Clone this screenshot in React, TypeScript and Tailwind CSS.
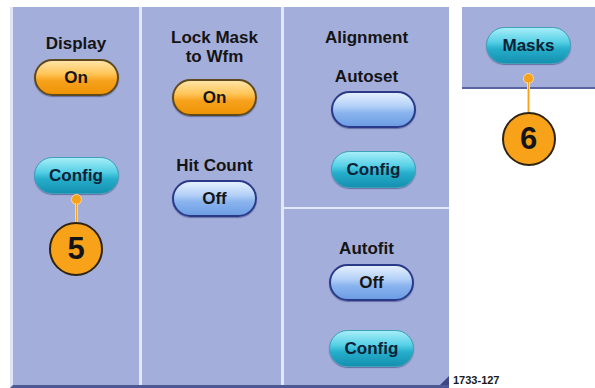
type Tone = "orange" | "cyan" | "blue";

const tones: Record<Tone, string> = {
  orange:
    "bg-[linear-gradient(to_bottom,#ffe4a6_0%,#ffc456_40%,#f7a11c_60%,#ee9406_100%)] border-2 border-[#5e4a1e] text-[#151515]",
  cyan:
    "bg-[linear-gradient(to_bottom,#a6eef8_0%,#56d0e6_40%,#25aecb_60%,#1590b0_100%)] border border-[#3e9fb6] text-[#0c2236]",
  blue:
    "bg-[linear-gradient(to_bottom,#e4efff_0%,#b3d0f7_40%,#8ab4ee_60%,#6d9de4_100%)] border-2 border-[#2a3a88] text-[#151515]",
};

function Pill({ tone, children }: { tone: Tone; children?: React.ReactNode }) {
  return (
    <div
      className={`w-[85px] h-[37px] rounded-full flex items-center justify-center text-[17px] font-bold shadow-[0_1px_1px_rgba(40,50,110,0.5)] ${tones[tone]}`}
    >
      {children}
    </div>
  );
}

function Label({ children }: { children: React.ReactNode }) {
  return <div className="text-[17px] leading-[19px] font-bold text-[#141414] text-center">{children}</div>;
}

// orange numbered marker hanging below a button
function Callout({ n, top, line }: { n: string; top: number; line: number }) {
  return (
    <div
      className="absolute left-1/2 -translate-x-1/2 flex flex-col items-center"
      style={{ top }}
    >
      <div className="w-[11px] h-[11px] rounded-full bg-[#f7a21b] border border-[#fcd79a]" />
      <div className="w-[3px] bg-[#f7a21b] border-x border-[#fcd79a] -mt-[2px]" style={{ height: line }} />
      <div className="w-[54px] h-[54px] rounded-full bg-[#f8a21a] border-2 border-[#2e2410] flex items-center justify-center text-[31px] font-bold text-[#141414]">
        {n}
      </div>
    </div>
  );
}

export default function App() {
  return (
    <div className="w-[595px] h-[388px] bg-white flex items-start pl-[10px] pt-[7px] font-['Liberation_Sans',Arial,sans-serif] overflow-hidden">
      <div className="relative flex h-[381px] bg-[#a4aedb] border-l-[3px] border-l-[#dfe5f6] border-b-[3px] border-b-[#4e5894]">
        {/* Display column */}
        <div className="w-[126px] flex flex-col items-center pt-[27px]">
          <Label>Display</Label>
          <div className="mt-[6px]">
            <Pill tone="orange">On</Pill>
          </div>
          <div className="relative mt-[61px]">
            <Pill tone="cyan">Config</Pill>
            <Callout n="5" top={37} line={19} />
          </div>
        </div>
        <div className="w-[3px] bg-[#e2e8f7]" />

        {/* Lock mask column */}
        <div className="w-[139px] flex flex-col items-center pt-[21px] pl-[6px]">
          <Label>
            Lock Mask
            <br />
            to Wfm
          </Label>
          <div className="mt-[13px]">
            <Pill tone="orange">On</Pill>
          </div>
          <div className="mt-[40px]">
            <Label>Hit Count</Label>
          </div>
          <div className="mt-[5px]">
            <Pill tone="blue">Off</Pill>
          </div>
        </div>
        <div className="w-[3px] bg-[#e2e8f7]" />

        {/* Alignment column */}
        <div className="w-[165px] flex flex-col">
          <div className="h-[200px] flex flex-col items-center pt-[21px]">
            <Label>Alignment</Label>
            <div className="mt-[20px]">
              <Label>Autoset</Label>
            </div>
            <div className="mt-[5px] pl-[14px]">
              <Pill tone="blue" />
            </div>
            <div className="mt-[23px] pl-[14px]">
              <Pill tone="cyan">Config</Pill>
            </div>
          </div>
          <div className="h-[2px] bg-[#e2e8f7]" />
          <div className="flex-1 flex flex-col items-center pt-[30px]">
            <Label>Autofit</Label>
            <div className="mt-[6px] pl-[10px]">
              <Pill tone="blue">Off</Pill>
            </div>
            <div className="mt-[29px] pl-[10px]">
              <Pill tone="cyan">Config</Pill>
            </div>
          </div>
        </div>
        <div className="absolute right-0 bottom-0 w-0 h-0 border-l-[9px] border-l-transparent border-b-[9px] border-b-[#3e4784]" />
      </div>

      {/* Masks panel and figure number */}
      <div className="ml-[13px] w-[133px] h-[381px] flex flex-col">
        <div className="relative h-[82px] bg-[#a4aedb] border-b-2 border-b-[#5a64a0] flex justify-center pt-[20px]">
          <div className="relative h-[37px]">
            <Pill tone="cyan">Masks</Pill>
            <Callout n="6" top={46} line={30} />
          </div>
        </div>
        <div className="mt-auto -ml-[9px] text-[11px] leading-[12px] font-bold text-[#1a1a1a] pb-[2px]">1733-127</div>
      </div>
    </div>
  );
}
